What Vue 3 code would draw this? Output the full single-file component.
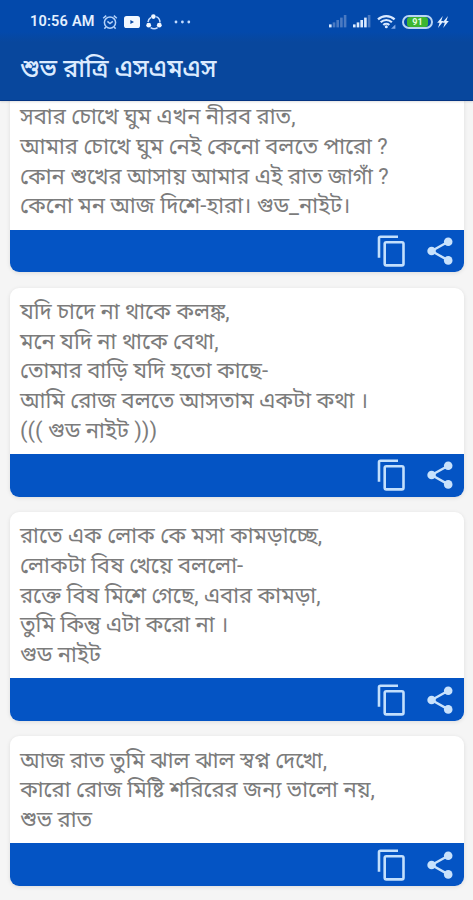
<template>
  <div class="screen">
    <header class="top">
      <div class="status">
        <span class="clock">10:56 AM</span>
        <svg class="alarm" viewBox="0 0 16 16" fill="none" stroke="#b4d2f8" stroke-width="1.5">
          <circle cx="8" cy="8.6" r="5.6" />
          <path d="M1.2 4.2 4.2 1.6M14.8 4.2 11.8 1.6M5.4 7.4 8 9.6l2.8-2.2M3.8 13l-1.4 1.8M12.2 13l1.4 1.8" />
        </svg>
        <svg class="video" viewBox="0 0 16 12">
          <rect width="16" height="12" rx="2.6" fill="#f2f8ff" />
          <path d="M6.4 4v4L10 6z" fill="#0748a4" />
        </svg>
        <svg class="share-it" viewBox="0 0 16 16" fill="none" stroke="#c9dfff" stroke-width="1.5">
          <path d="M5 3.4A6.4 6.4 0 0 0 2 8M10.2 2.6A6.4 6.4 0 0 1 14 8.4M4.6 13.6a6.4 6.4 0 0 0 7 0" />
          <g fill="#f2f8ff" stroke="none">
            <circle cx="7.4" cy="2.6" r="2.3" />
            <circle cx="2.7" cy="11.2" r="2.4" />
            <circle cx="13.3" cy="11.2" r="2.4" />
          </g>
        </svg>
        <svg class="dots" viewBox="0 0 17 4" fill="#c4dcff">
          <circle cx="2" cy="2" r="1.4" />
          <circle cx="8.4" cy="2" r="1.4" />
          <circle cx="14.8" cy="2" r="1.4" />
        </svg>
        <span class="spacer"></span>
        <svg v-for="(level, i) in [1, 4]" :key="i" class="signal" viewBox="0 0 18 13">
          <rect
            v-for="n in 5"
            :key="n"
            :x="(n - 1) * 3.7"
            :y="12.4 - bars[n - 1]"
            width="2.6"
            :height="bars[n - 1]"
            :fill="n <= level ? '#dcebff' : '#4a7ac2'"
          />
        </svg>
        <svg class="wifi" viewBox="0 0 20 16" fill="none" stroke="#d9e9ff" stroke-width="2.2">
          <path d="M1 5.4a12 12 0 0 1 16.6 0M3.7 8.3a8 8 0 0 1 11.2 0M6.3 11a4.4 4.4 0 0 1 6 0" />
          <circle cx="9.3" cy="12.8" r="1.5" fill="#d9e9ff" stroke="none" />
          <path d="M14 14.8h4.4v-4.2z" fill="#7fa8e6" stroke="none" />
        </svg>
        <span class="battery"><span class="charge">91</span></span>
        <svg class="bolt" viewBox="0 0 12 12" fill="#e4f0ff">
          <path d="M5.8 0 .2 6.8h2.4L1 12l5.6-7H4.2zM11 0 5.4 6.8h2.4L6.2 12l5.6-7H9.4z" />
        </svg>
      </div>
      <h1 class="title">শুভ রাত্রি এসএমএস</h1>
    </header>

    <main class="feed">
      <article v-for="(message, i) in messages" :key="i" class="card">
        <div class="card-body">
          <p v-for="line in message" :key="line" class="line">{{ line }}</p>
        </div>
        <footer class="card-actions">
          <button type="button" aria-label="Copy">
            <svg class="copy" viewBox="0 0 28 32" fill="none" stroke="#c3dffc" stroke-width="2.6">
              <path d="M2 22.7V3.2Q2 1.7 3.5 1.7H21" />
              <rect x="7.7" y="7.2" width="18.8" height="23.2" rx="1.6" />
            </svg>
          </button>
          <button type="button" aria-label="Share">
            <svg class="share" viewBox="0 0 26 28" fill="#c9e2fc">
              <path d="M21.2 4.7 4.6 14l16.6 9.4" fill="none" stroke="#c9e2fc" stroke-width="2.4" />
              <circle cx="21.2" cy="4.7" r="4.3" />
              <circle cx="4.6" cy="14" r="4.3" />
              <circle cx="21.2" cy="23.4" r="4.3" />
            </svg>
          </button>
        </footer>
      </article>
    </main>
  </div>
</template>

<script setup>
const bars = [3, 5, 7.4, 9.8, 12.4]

const messages = [
  [
    'সবার চোখে ঘুম এখন নীরব রাত,',
    'আমার চোখে ঘুম নেই কেনো বলতে পারো ?',
    'কোন শুখের আসায় আমার এই রাত জাগাঁ ?',
    'কেনো মন আজ দিশে-হারা। গুড_নাইট।',
  ],
  [
    'যদি চাদে না থাকে কলঙ্ক,',
    'মনে যদি না থাকে বেথা,',
    'তোমার বাড়ি যদি হতো কাছে-',
    'আমি রোজ বলতে আসতাম একটা কথা ।',
    '((( গুড নাইট )))',
  ],
  [
    'রাতে এক লোক কে মসা কামড়াচ্ছে,',
    'লোকটা বিষ খেয়ে বললো-',
    'রক্তে বিষ মিশে গেছে, এবার কামড়া,',
    'তুমি কিন্তু এটা করো না ।',
    'গুড নাইট',
  ],
  [
    'আজ রাত তুমি ঝাল ঝাল স্বপ্ন দেখো,',
    'কারো রোজ মিষ্টি শরিরের জন্য ভালো নয়,',
    'শুভ রাত',
  ],
]
</script>

<style>
body {
  background: #f5f5f5;
}
</style>

<style scoped>
.screen {
  display: flex;
  flex-direction: column;
  height: 900px;
  overflow: hidden;
  background: #f5f5f5;
  font-family: Roboto, 'Noto Sans Bengali', 'Noto Sans', sans-serif;
}

.top {
  flex: none;
  height: 101px;
  box-sizing: border-box;
  border-bottom: 1.5px solid #043482;
  background: linear-gradient(#0349ab 0 32px, #08479d 42px);
  box-shadow: 0 1px 2px rgba(0, 0, 0, 0.12);
  position: relative;
  z-index: 1;
}

.status {
  display: flex;
  align-items: center;
  height: 43px;
  padding: 0 24px 0 30px;
}

.clock {
  width: 72px;
  font-size: 14.5px;
  font-weight: 600;
  letter-spacing: 0.2px;
  white-space: nowrap;
  color: #e4f0ff;
}

.alarm {
  width: 16px;
  height: 16px;
}

.video {
  width: 16px;
  height: 12px;
  margin-left: 6px;
}

.share-it {
  width: 16px;
  height: 16px;
  margin-left: 6px;
}

.dots {
  width: 17px;
  height: 4px;
  margin-left: 12px;
}

.spacer {
  flex: 1;
}

.signal {
  width: 18px;
  height: 13px;
  margin-right: 6px;
}

.wifi {
  width: 20px;
  height: 16px;
  margin-right: 5px;
}

.battery {
  display: flex;
  box-sizing: border-box;
  width: 31px;
  height: 14px;
  padding: 0 3px;
  border: 2px solid #b9d5f5;
  border-radius: 7px;
}

.charge {
  flex: 1;
  border-radius: 3px;
  background: #3cb531;
  color: #e6ffe0;
  font-size: 9px;
  font-weight: 700;
  line-height: 10px;
  text-align: center;
}

.bolt {
  width: 12px;
  height: 12px;
  margin-left: 4px;
}

.title {
  margin: 0;
  padding-left: 20px;
  font-size: 25px;
  font-weight: 500;
  line-height: 52px;
  white-space: nowrap;
  color: #dcebff;
}

.feed {
  display: flex;
  flex-direction: column;
  gap: 15.4px;
  margin-top: -8px;
  padding: 0 9px 0 10px;
}

.card {
  flex: none;
  overflow: hidden;
  border-radius: 9px;
  background: #fff;
  box-shadow: 0 1px 4px rgba(0, 0, 0, 0.1);
}

.card-body {
  padding: 9.2px 10px 8.45px;
}

.line {
  margin: 0;
  height: 29.75px;
  font-size: 22px;
  line-height: 29.75px;
  white-space: nowrap;
  color: #7c7c7c;
}

.card-actions {
  display: flex;
  align-items: center;
  justify-content: flex-end;
  gap: 22px;
  height: 42.6px;
  padding-right: 11px;
  background: #0454c4;
}

button {
  display: flex;
  padding: 0;
  border: 0;
  background: none;
}

.copy {
  width: 28px;
  height: 32px;
}

.share {
  width: 26px;
  height: 28px;
}
</style>
